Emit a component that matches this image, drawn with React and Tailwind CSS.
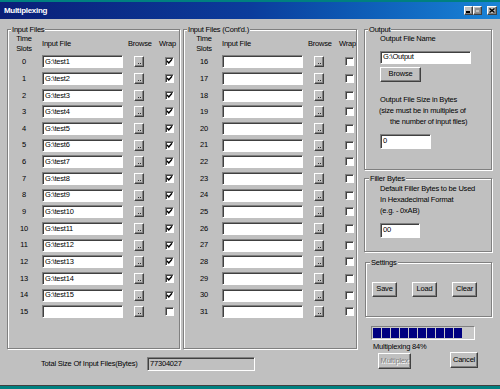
const sunken = 'border border-t-[#808080] border-l-[#808080] border-r-white border-b-white shadow-[inset_1px_1px_0_#404040]';
const raised = 'bg-[#c0c0c0] border border-t-white border-l-white border-r-[#404040] border-b-[#404040] shadow-[inset_-1px_-1px_0_#808080]';

const leftFiles = [
  'G:\\test1', 'G:\\test2', 'G:\\test3', 'G:\\test4', 'G:\\test5', 'G:\\test6', 'G:\\test7', 'G:\\test8',
  'G:\\test9', 'G:\\test10', 'G:\\test11', 'G:\\test12', 'G:\\test13', 'G:\\test14', 'G:\\test15', '',
];
const rightFiles = Array(16).fill('');

function Group({ label, className, labelClass, children }) {
  return (
    <div className={`flex flex-col border border-[#808080] shadow-[inset_1px_1px_0_#fff,1px_1px_0_#fff] ${className}`}>
      <span className={`-mt-[4.5px] self-start bg-[#c0c0c0] px-[1px] leading-[8px] ${labelClass}`}>{label}</span>
      {children}
    </div>
  );
}

function Checkbox({ checked }) {
  return (
    <div className={`w-[9px] h-[9px] bg-white flex items-center justify-center ${sunken}`}>
      {checked && (
        <svg width="7" height="7" viewBox="0 0 7 7">
          <path d="M1 3 L2.8 5 L6 1.2" fill="none" stroke="#000" strokeWidth="1.4" />
        </svg>
      )}
    </div>
  );
}

function FileTable({ start, files, pad }) {
  return (
    <div className={pad}>
      <div className="flex items-center">
        <div className="w-[28px] text-center leading-[10px]">
          <div>Time</div>
          <div>Slots</div>
        </div>
        <span className="ml-[4px] w-[86px]">Input File</span>
        <span className="w-[31px]">Browse</span>
        <span>Wrap</span>
      </div>
      <div className="flex flex-col">
        {files.map((f, i) => (
          <div key={i} className="h-[16.67px] flex items-center">
            <div className="w-[28px] text-center">{start + i}</div>
            <div className={`ml-[4px] w-[81px] h-[13px] bg-white pl-[2px] flex items-center ${sunken}`}>{f}</div>
            <div className={`ml-[11px] w-[10px] h-[11px] flex items-end justify-center gap-[1px] pb-[2px] ${raised}`}>
              <div className="w-[1px] h-[1px] bg-[#303030]" />
              <div className="w-[1px] h-[1px] bg-[#303030]" />
            </div>
            <div className="ml-[21px]">
              <Checkbox checked={f !== ''} />
            </div>
          </div>
        ))}
      </div>
    </div>
  );
}

function Btn({ children, className }) {
  return <div className={`flex items-center justify-center ${raised} ${className}`}>{children}</div>;
}

export default function App() {
  return (
    <div className="w-[500px] h-[389px] overflow-hidden flex flex-col bg-[#c0c0c0] text-black text-[7.5px] tracking-[-0.2px] [font-family:'Liberation_Sans',Arial,sans-serif]">
      <div className="h-[2px] bg-[#008080]" />

      {/* Title bar */}
      <div className="h-[17px] flex items-center pl-[4px] pr-[3px] bg-gradient-to-r from-[#0a1e78] via-[#0b3c9c] to-[#1a84d8]">
        <span className="text-white font-bold text-[8px] tracking-[-0.3px]">Multiplexing</span>
        <div className="ml-auto flex items-center">
          <div className={`w-[9px] h-[9px] flex items-end justify-start pl-[1px] pb-[1px] ${raised}`}>
            <div className="w-[4px] h-[2px] bg-black" />
          </div>
          <div className={`w-[9px] h-[9px] flex items-center justify-center ${raised}`}>
            <div className="w-[5px] h-[5px] border border-[#909090] border-t-2" />
          </div>
          <div className={`ml-[5px] w-[10px] h-[9px] flex items-center justify-center ${raised}`}>
            <svg width="6" height="5" viewBox="0 0 6 5">
              <path d="M0.5 0.5 L5.5 4.5 M5.5 0.5 L0.5 4.5" stroke="#000" strokeWidth="1.4" />
            </svg>
          </div>
        </div>
      </div>

      {/* Body */}
      <div className="flex-1 flex pt-[10px] pl-[7px]">
        {/* Left side */}
        <div className="flex flex-col">
          <div className="flex gap-[3px]">
            <Group label="Input Files" className="w-[173px] h-[320px]" labelClass="ml-[3px]">
              <FileTable start={0} files={leftFiles} pad="pl-[2px]" />
            </Group>
            <Group label="Input Files (Cont'd.)" className="w-[174px] h-[320px]" labelClass="ml-[3px]">
              <FileTable start={16} files={rightFiles} pad="pl-[6px]" />
            </Group>
          </div>
          <div className="mt-[8px] flex items-center">
            <span className="ml-[34px] w-[106px]">Total Size Of Input Files(Bytes)</span>
            <div className={`w-[108px] h-[14px] bg-[#c0c0c0] pl-[2px] flex items-center ${sunken}`}>77304027</div>
          </div>
        </div>

        {/* Right side */}
        <div className="ml-[7px] w-[128px] flex flex-col">
          <Group label="Output" className="w-[128px] h-[141px]" labelClass="ml-[3px]">
            <div className="pl-[15px] flex flex-col items-start">
              <div className="leading-[9px]">Output File Name</div>
              <div className={`mt-[8px] w-[91px] h-[13px] bg-white pl-[2px] flex items-center ${sunken}`}>G:\Output</div>
              <Btn className="mt-[3px] w-[41px] h-[15px]">Browse</Btn>
              <div className="mt-[12px] leading-[11px]">
                <div>Output File Size in Bytes</div>
                <div className="-ml-[1px]">(size must be in multiples of</div>
                <div className="pl-[10px]">the number of input files)</div>
              </div>
              <div className={`mt-[7px] w-[51px] h-[15px] bg-white pl-[2px] flex items-center ${sunken}`}>0</div>
            </div>
          </Group>

          <Group label="Filler Bytes" className="mt-[8px] w-[128px] h-[74px]" labelClass="ml-[4px]">
            <div className="pl-[15px] flex flex-col items-start">
              <div className="leading-[11px]">
                <div>Default Filler Bytes to be Used</div>
                <div>In Hexadecimal Format</div>
                <div>(e.g. - 0xAB)</div>
              </div>
              <div className={`mt-[7px] w-[40px] h-[15px] bg-white pl-[2px] flex items-center ${sunken}`}>00</div>
            </div>
          </Group>

          <Group label="Settings" className="mt-[10px] ml-[1px] w-[127px] h-[55px]" labelClass="ml-[4px]">
            <div className="mt-[15px] pl-[6px] flex gap-[15px]">
              <Btn className="w-[25px] h-[15px]">Save</Btn>
              <Btn className="w-[25px] h-[15px]">Load</Btn>
              <Btn className="w-[25px] h-[15px]">Clear</Btn>
            </div>
          </Group>

          {/* Progress */}
          <div className="mt-[9px] ml-[7px] w-[104px] h-[14px] border border-t-[#808080] border-l-[#808080] border-r-white border-b-white bg-[#c8c8c8] flex gap-[1px] p-[1px]">
            {Array.from({ length: 10 }).map((_, i) => (
              <div key={i} className="w-[8px] h-full bg-[#000080]" />
            ))}
          </div>
          <div className="mt-[2px] ml-[9px] leading-[9px]">Multiplexing 84%</div>
          <div className="flex items-start">
            <Btn className="mt-[2px] ml-[14px] w-[33px] h-[16px] text-[#808080] [text-shadow:1px_1px_0_#fff]">Multiplex</Btn>
            <Btn className="mt-[1px] ml-[39px] w-[28px] h-[16px]">Cancel</Btn>
          </div>
        </div>
      </div>

      <div className="h-[4px] bg-[#008080] border-t border-t-[#404040]" />
    </div>
  );
}
